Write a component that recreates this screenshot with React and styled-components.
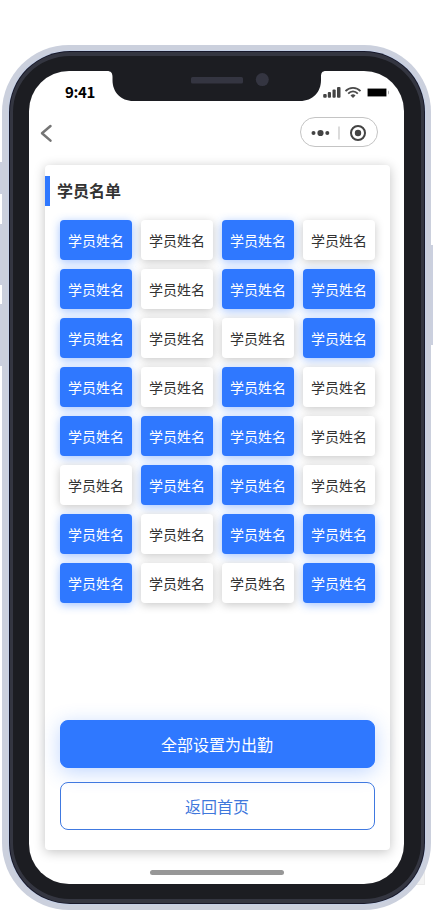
import React from "react";
import styled, { createGlobalStyle } from "styled-components";

const GlobalStyle = createGlobalStyle`
  * { box-sizing: border-box; }
  html, body { margin: 0; padding: 0; background: #fff; overflow: hidden; }
  body { font-family: "Noto Sans CJK SC", "Noto Sans", sans-serif; color: #333; }
`;

const Page = styled.main`
  width: 433px;
  height: 910px;
  padding: 45px 2px 0;
  position: relative;
  overflow: hidden;
  background: #fff;
`;

const SideKey = styled.span`
  position: absolute;
  top: ${(p) => p.$top}px;
  ${(p) => (p.$right ? "right" : "left")}: -1px;
  width: 5px;
  height: ${(p) => p.$height}px;
  background: #cbd0df;
`;

const CornerMark = styled.span`
  position: absolute;
  right: 8px;
  bottom: 25px;
  width: 20px;
  height: 20px;
  background: #f4f4f4;
  border: 1px solid #ebebeb;
`;

const Shell = styled.div`
  position: relative;
  width: 429px;
  height: 865px;
  padding: 6px 6px 6px 7px;
  border-radius: 67px;
  background: #cbd0dd;
`;

const Rim = styled.div`
  height: 853px;
  padding: 1px;
  border-radius: 61px;
  background: #17182a;
  box-shadow: 0 0 0 1px #c5d0e6;
`;

const Bezel = styled.div`
  height: 851px;
  padding: 15px 16px;
  border: 4px solid #343641;
  border-width: 4px 3px;
  border-radius: 60px;
  background: #1c1d22;
`;

const Screen = styled.div`
  position: relative;
  width: 375px;
  height: 813px;
  border-radius: 40px;
  background: #fff;
  overflow: hidden;
  display: flex;
  flex-direction: column;
`;

const Notch = styled.div`
  position: absolute;
  top: 0;
  left: 78px;
  width: 219px;
  height: 30px;
  svg { display: block; }
`;

const StatusBar = styled.header`
  height: 44px;
  flex: none;
  display: flex;
  justify-content: space-between;
  padding: 11px 14px 0 36px;
`;

const Time = styled.time`
  font: 700 15px/20px "Noto Sans CJK SC", sans-serif;
  letter-spacing: -0.4px;
  color: #000;
`;

const StatusIcons = styled.div`
  width: 68px;
  height: 22px;
  svg { display: block; }
`;

const NavBar = styled.nav`
  height: 34px;
  flex: none;
  display: flex;
  align-items: center;
  justify-content: space-between;
  padding: 0 26px 0 10px;
`;

const BackButton = styled.button`
  border: 0;
  padding: 2px 0 0;
  background: none;
  display: flex;
`;

const Capsule = styled.div`
  width: 78px;
  height: 30px;
  border: 1px solid #c4c4c4;
  border-radius: 15px;
  display: flex;
`;

const Card = styled.section`
  width: 345px;
  height: 685px;
  margin: 16px 0 0 16px;
  flex: none;
  padding: 11px 15px 20px 0;
  display: flex;
  flex-direction: column;
  border-radius: 4px;
  background: #fff;
  box-shadow: 0 2px 12px rgba(0, 0, 0, 0.24);
`;

const Title = styled.h1`
  margin: 0;
  height: 30px;
  border-left: 5px solid #2f78ff;
  padding-left: 7px;
  font-size: 16px;
  line-height: 29px;
  font-weight: 700;
`;

const Roster = styled.div`
  margin: 14px 0 0 15px;
  display: grid;
  grid-template-columns: repeat(4, 72px);
  grid-auto-rows: 40px;
  gap: 9px;
`;

const Student = styled.button`
  border: 0;
  padding: 0;
  border-radius: 4px;
  font: 400 14px/40px "Noto Sans CJK SC", sans-serif;
  color: ${(p) => (p.$present ? "#fff" : "#333")};
  background: ${(p) => (p.$present ? "#2f78ff" : "#fff")};
  box-shadow: 0 2px 10px ${(p) => (p.$present ? "rgba(47,120,255,.45)" : "rgba(0,0,0,.22)")};
`;

const Actions = styled.div`
  margin: auto 0 0 15px;
  display: flex;
  flex-direction: column;
  gap: 14px;
`;

const Action = styled.button`
  height: 48px;
  padding: 1px 1px 0 0;
  border-radius: 8px;
  border: 1px solid ${(p) => (p.$primary ? "#2f78ff" : "#4079e0")};
  font: 400 16px/45px "Noto Sans CJK SC", sans-serif;
  color: ${(p) => (p.$primary ? "#fff" : "#3f78dc")};
  background: ${(p) => (p.$primary ? "#2f78ff" : "transparent")};
  box-shadow: ${(p) => (p.$primary ? "0 4px 20px rgba(47,120,255,.3)" : "none")};
`;

const HomeIndicator = styled.div`
  width: 134px;
  height: 5px;
  margin: 20px auto 0;
  position: relative;
  left: 0.5px;
  flex: none;
  border-radius: 3px;
  background: #979797;
`;

const attendance = ["1010", "1011", "1001", "1010", "1110", "0110", "1011", "1001"];

function NotchShape() {
  return (
    <Notch>
      <svg width="219" height="30" viewBox="0 0 219 30">
        <path d="M0 0C4 0 5.500 2 5.500 6v3c0 12 8 21 21 21h166.500c13 0 21-9 21-21V6c0-4 1-6 5-6z" fill="#1c1d22" />
        <rect x="84" y="6" width="52" height="6.5" rx="1.5" fill="#343541" />
        <circle cx="155.300" cy="8.600" r="6.500" fill="#343541" />
      </svg>
    </Notch>
  );
}

function StatusGlyphs() {
  return (
    <StatusIcons>
      <svg width="68" height="22" viewBox="0 0 68 22">
        <g fill="#444">
          <rect x="1.200" y="12" width="3.500" height="3.700" rx="1" />
          <rect x="5.800" y="10" width="3.200" height="5.700" rx="1" />
          <rect x="10.500" y="7.500" width="3.200" height="8.200" rx="1" />
          <rect x="15" y="5" width="3.500" height="10.700" rx="1" />
        </g>
        <g fill="none" stroke="#4a4a4a" strokeWidth="1.800">
          <path d="M23.500 9.200C27.500 4.800 34.500 4.800 38.500 9.200" />
          <path d="M26.200 11.700C29 8.700 33 8.700 35.800 11.700" />
        </g>
        <path d="M28.500 13.400Q31 11.200 33.500 13.400L31 16z" fill="#4a4a4a" />
        <rect x="45.500" y="6.500" width="19" height="8" rx="1" fill="#000" stroke="#929292" />
        <path d="M66 8.500q1 0 1 2t-1 2z" fill="#aaa" />
      </svg>
    </StatusIcons>
  );
}

export default function App() {
  return (
    <>
      <GlobalStyle />
      <Page>
        <CornerMark />
        <SideKey $top={162} $height={32} />
        <SideKey $top={224} $height={61} />
        <SideKey $top={304} $height={62} />
        <SideKey $top={245} $height={100} $right />
        <Shell>
          <Rim>
            <Bezel>
              <Screen>
                <NotchShape />
                <StatusBar>
                  <Time>9:41</Time>
                  <StatusGlyphs />
                </StatusBar>
                <NavBar>
                  <BackButton aria-label="返回">
                    <svg width="14" height="20" viewBox="0 0 14 20" fill="none" stroke="#757575" strokeWidth="2.500" strokeLinecap="round" strokeLinejoin="round">
                      <path d="M11.500 3L3 10.200l8.500 7.400" />
                    </svg>
                  </BackButton>
                  <Capsule>
                    <svg width="76" height="28" viewBox="0 0 76 28">
                      <g fill="#444">
                        <circle cx="12.500" cy="15" r="2" />
                        <circle cx="19.500" cy="15" r="3.100" />
                        <circle cx="26.300" cy="15" r="2" />
                        <circle cx="57" cy="15" r="3.200" />
                      </g>
                      <path d="M38 8.500v13" stroke="#c4c4c4" strokeWidth="1.200" />
                      <circle cx="57" cy="15" r="7" fill="none" stroke="#444" strokeWidth="2" />
                    </svg>
                  </Capsule>
                </NavBar>
                <Card>
                  <Title>学员名单</Title>
                  <Roster>
                    {attendance.flatMap((row, r) =>
                      [...row].map((state, c) => (
                        <Student key={`${r}-${c}`} $present={state === "1"}>学员姓名</Student>
                      ))
                    )}
                  </Roster>
                  <Actions>
                    <Action $primary>全部设置为出勤</Action>
                    <Action>返回首页</Action>
                  </Actions>
                </Card>
                <HomeIndicator />
              </Screen>
            </Bezel>
          </Rim>
        </Shell>
      </Page>
    </>
  );
}
